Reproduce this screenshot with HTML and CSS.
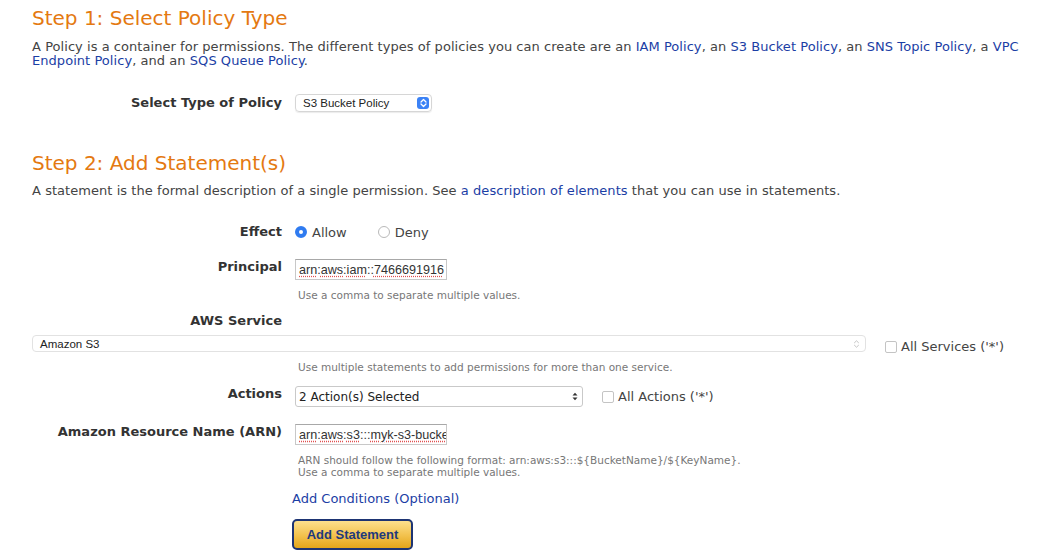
FILE: index.html
```html
<!DOCTYPE html>
<html>
<head>
<meta charset="utf-8">
<link rel="stylesheet" href="styles.css">
</head>
<body>
<div class="page">
  <h1 class="step-title">Step 1: Select Policy Type</h1>
  <p class="intro">A Policy is a container for permissions. The different types of policies you can create are an <a href="#">IAM Policy</a>, an <a href="#">S3 Bucket Policy</a>, an <a href="#">SNS Topic Policy</a>, a <a href="#">VPC Endpoint Policy</a>, and an <a href="#">SQS Queue Policy</a>.</p>

  <div class="row row-policy">
    <div class="label">Select Type of Policy</div>
    <div class="control">
      <div class="mac-select">
        <span>S3 Bucket Policy</span>
        <span class="mac-arrow"><svg width="7" height="10" viewBox="0 0 7 10"><path d="M1 4 L3.5 1.5 L6 4 M1 6 L3.5 8.5 L6 6" fill="none" stroke="#fff" stroke-width="1.3" stroke-linecap="round" stroke-linejoin="round"/></svg></span>
      </div>
    </div>
  </div>

  <h1 class="step-title step2">Step 2: Add Statement(s)</h1>
  <p class="intro intro2">A statement is the formal description of a single permission. See <a href="#">a description of elements</a> that you can use in statements.</p>

  <div class="row row-effect">
    <div class="label">Effect</div>
    <div class="control radios">
      <label class="radio"><span class="dot checked"></span>Allow</label>
      <label class="radio deny"><span class="dot"></span>Deny</label>
    </div>
  </div>

  <div class="row row-principal">
    <div class="label">Principal</div>
    <div class="control">
      <div class="text-input"><span class="spell">arn</span>:<span class="spell">aws</span>:<span class="spell">iam</span>::<span class="spell">7466691916</span></div>
      <div class="hint">Use a comma to separate multiple values.</div>
    </div>
  </div>

  <div class="service-label-row">
    <div class="label">AWS Service</div>
  </div>
  <div class="service-row">
    <div class="wide-select">
      <span>Amazon S3</span>
      <svg width="7" height="10" viewBox="0 0 7 10"><path d="M1.2 4 L3.5 1.8 L5.8 4 M1.2 6 L3.5 8.2 L5.8 6" fill="none" stroke="#c4c4c4" stroke-width="1"/></svg>
    </div>
    <label class="check"><span class="box"></span>All Services ('*')</label>
  </div>
  <div class="row row-service-hint">
    <div class="label"></div>
    <div class="control"><div class="hint">Use multiple statements to add permissions for more than one service.</div></div>
  </div>

  <div class="row row-actions">
    <div class="label">Actions</div>
    <div class="control actions-ctl">
      <div class="actions-select">
        <span>2 Action(s) Selected</span>
        <svg width="6" height="9" viewBox="0 0 6 9"><path d="M0.5 3.6 L3 0.8 L5.5 3.6 Z M0.5 5.4 L3 8.2 L5.5 5.4 Z" fill="#333"/></svg>
      </div>
      <label class="check"><span class="box"></span>All Actions ('*')</label>
    </div>
  </div>

  <div class="row row-arn">
    <div class="label">Amazon Resource Name (ARN)</div>
    <div class="control">
      <div class="text-input"><span class="spell">arn</span>:<span class="spell">aws</span>:<span class="spell">s3</span>:::<span class="spell">myk-s3-bucket</span></div>
      <div class="hint">ARN should follow the following format: arn:aws:s3:::${BucketName}/${KeyName}.<br>Use a comma to separate multiple values.</div>
      <a href="#" class="conditions">Add Conditions (Optional)</a>
      <button class="add-btn" type="button">Add Statement</button>
    </div>
  </div>
</div>
</body>
</html>
```

FILE: styles.css
```css
html, body {
  margin: 0;
  padding: 0;
  background: #fff;
}

body {
  font-family: "DejaVu Sans", Verdana, sans-serif;
  color: #444;
  font-size: 13px;
}

.page {
  padding: 6px 20px 0 32px;
}

a {
  color: #1b3ea5;
  text-decoration: none;
}

.step-title {
  margin: 0;
  font-size: 20px;
  line-height: 24px;
  font-weight: normal;
  color: #e47911;
}

.step2 {
  margin-top: 39px;
}

.intro {
  margin: 10px 0 0;
  font-size: 13px;
  line-height: 14px;
  letter-spacing: 0.05px;
}

.intro2 {
  margin-top: 9px;
}

.row {
  display: grid;
  grid-template-columns: 250px 1fr;
  column-gap: 13px;
}

.label {
  text-align: right;
  font-weight: bold;
  color: #333;
  font-size: 13px;
  line-height: 16px;
}

.control {
  display: flex;
  flex-direction: column;
  align-items: flex-start;
}

.row-policy {
  margin-top: 26px;
}

.row-policy .label {
  padding-top: 1px;
}

.mac-select {
  box-sizing: border-box;
  width: 137px;
  height: 18px;
  border: 1px solid #d6d6d6;
  border-radius: 4px;
  box-shadow: 0 1px 1px rgba(0,0,0,0.08);
  display: flex;
  align-items: center;
  justify-content: space-between;
  padding: 0 2px 0 7px;
  font-family: "Liberation Sans", Arial, sans-serif;
  font-size: 11.5px;
  color: #222;
}

.mac-arrow {
  width: 12px;
  height: 12px;
  border-radius: 3px;
  background: #3b82f6;
  display: flex;
  align-items: center;
  justify-content: center;
}

.row-effect {
  margin-top: 26px;
}

.radios {
  flex-direction: row;
  align-items: center;
  height: 16px;
}

.radio {
  display: flex;
  align-items: center;
  color: #444;
  font-size: 13px;
}

.radio.deny {
  margin-left: 31px;
}

.dot {
  box-sizing: border-box;
  width: 12px;
  height: 12px;
  border-radius: 50%;
  border: 1px solid #b9b9b9;
  margin-right: 5px;
  background: #fff;
}

.dot.checked {
  border: 4px solid #2f7bf0;
  background: #fff;
}

.text-input {
  box-sizing: border-box;
  width: 152px;
  height: 21px;
  border: 1px solid #c8c8c8;
  border-top-color: #a8a8a8;
  padding: 0 2px 0 3px;
  display: flex;
  align-items: center;
  overflow: hidden;
  white-space: nowrap;
  font-family: "Liberation Sans", Arial, sans-serif;
  font-size: 12.6px;
  color: #333;
}

.spell {
  text-decoration: underline dotted #e05050;
  text-underline-offset: 2px;
}

.row-principal {
  margin-top: 19px;
}

.hint {
  margin-top: 9px;
  margin-left: 3px;
  font-size: 10.5px;
  line-height: 12px;
  color: #777;
}

.service-label-row {
  display: grid;
  grid-template-columns: 250px;
  margin-top: 12px;
}

.service-row {
  display: flex;
  align-items: flex-start;
  margin-top: 6px;
  height: 17px;
}

.wide-select {
  box-sizing: border-box;
  width: 834px;
  height: 17px;
  border: 1px solid #e2e2e2;
  border-radius: 4px;
  display: flex;
  align-items: center;
  justify-content: space-between;
  padding: 0 5px 0 7px;
  font-family: "Liberation Sans", Arial, sans-serif;
  font-size: 11.5px;
  color: #222;
}

.check {
  display: flex;
  align-items: center;
  font-size: 13px;
  line-height: 16px;
  color: #444;
}

.service-row .check {
  margin-left: 19px;
  margin-top: 4px;
}

.box {
  box-sizing: border-box;
  width: 12px;
  height: 12px;
  border: 1px solid #c4c4c4;
  border-radius: 2px;
  margin-right: 4px;
  background: #fff;
}

.row-service-hint .hint {
  margin-top: 9px;
}

.row-actions {
  margin-top: 13px;
}

.actions-ctl {
  flex-direction: row;
  align-items: center;
}

.actions-select {
  box-sizing: border-box;
  width: 288px;
  height: 21px;
  border: 1px solid #c9c9c9;
  border-radius: 3px;
  display: flex;
  align-items: center;
  justify-content: space-between;
  padding: 0 4px 0 3px;
  font-size: 12px;
  color: #222;
}

.actions-ctl .check {
  margin-left: 19px;
}

.row-arn {
  margin-top: 17px;
}

.row-arn .hint {
  margin-top: 9px;
}

.conditions {
  margin-top: 13px;
  margin-left: -3px;
  font-size: 13px;
  line-height: 16px;
  color: #1b3ea5;
}

.add-btn {
  margin-top: 12px;
  margin-left: -3px;
  width: 121px;
  height: 31px;
  border: 2px solid #1d3473;
  border-radius: 5px;
  background: linear-gradient(#fde08d, #f2c14c 55%, #e3a51a);
  font-family: "Liberation Sans", Arial, sans-serif;
  font-weight: bold;
  font-size: 13px;
  color: #1e3a7c;
  padding: 0;
  cursor: pointer;
}
```
